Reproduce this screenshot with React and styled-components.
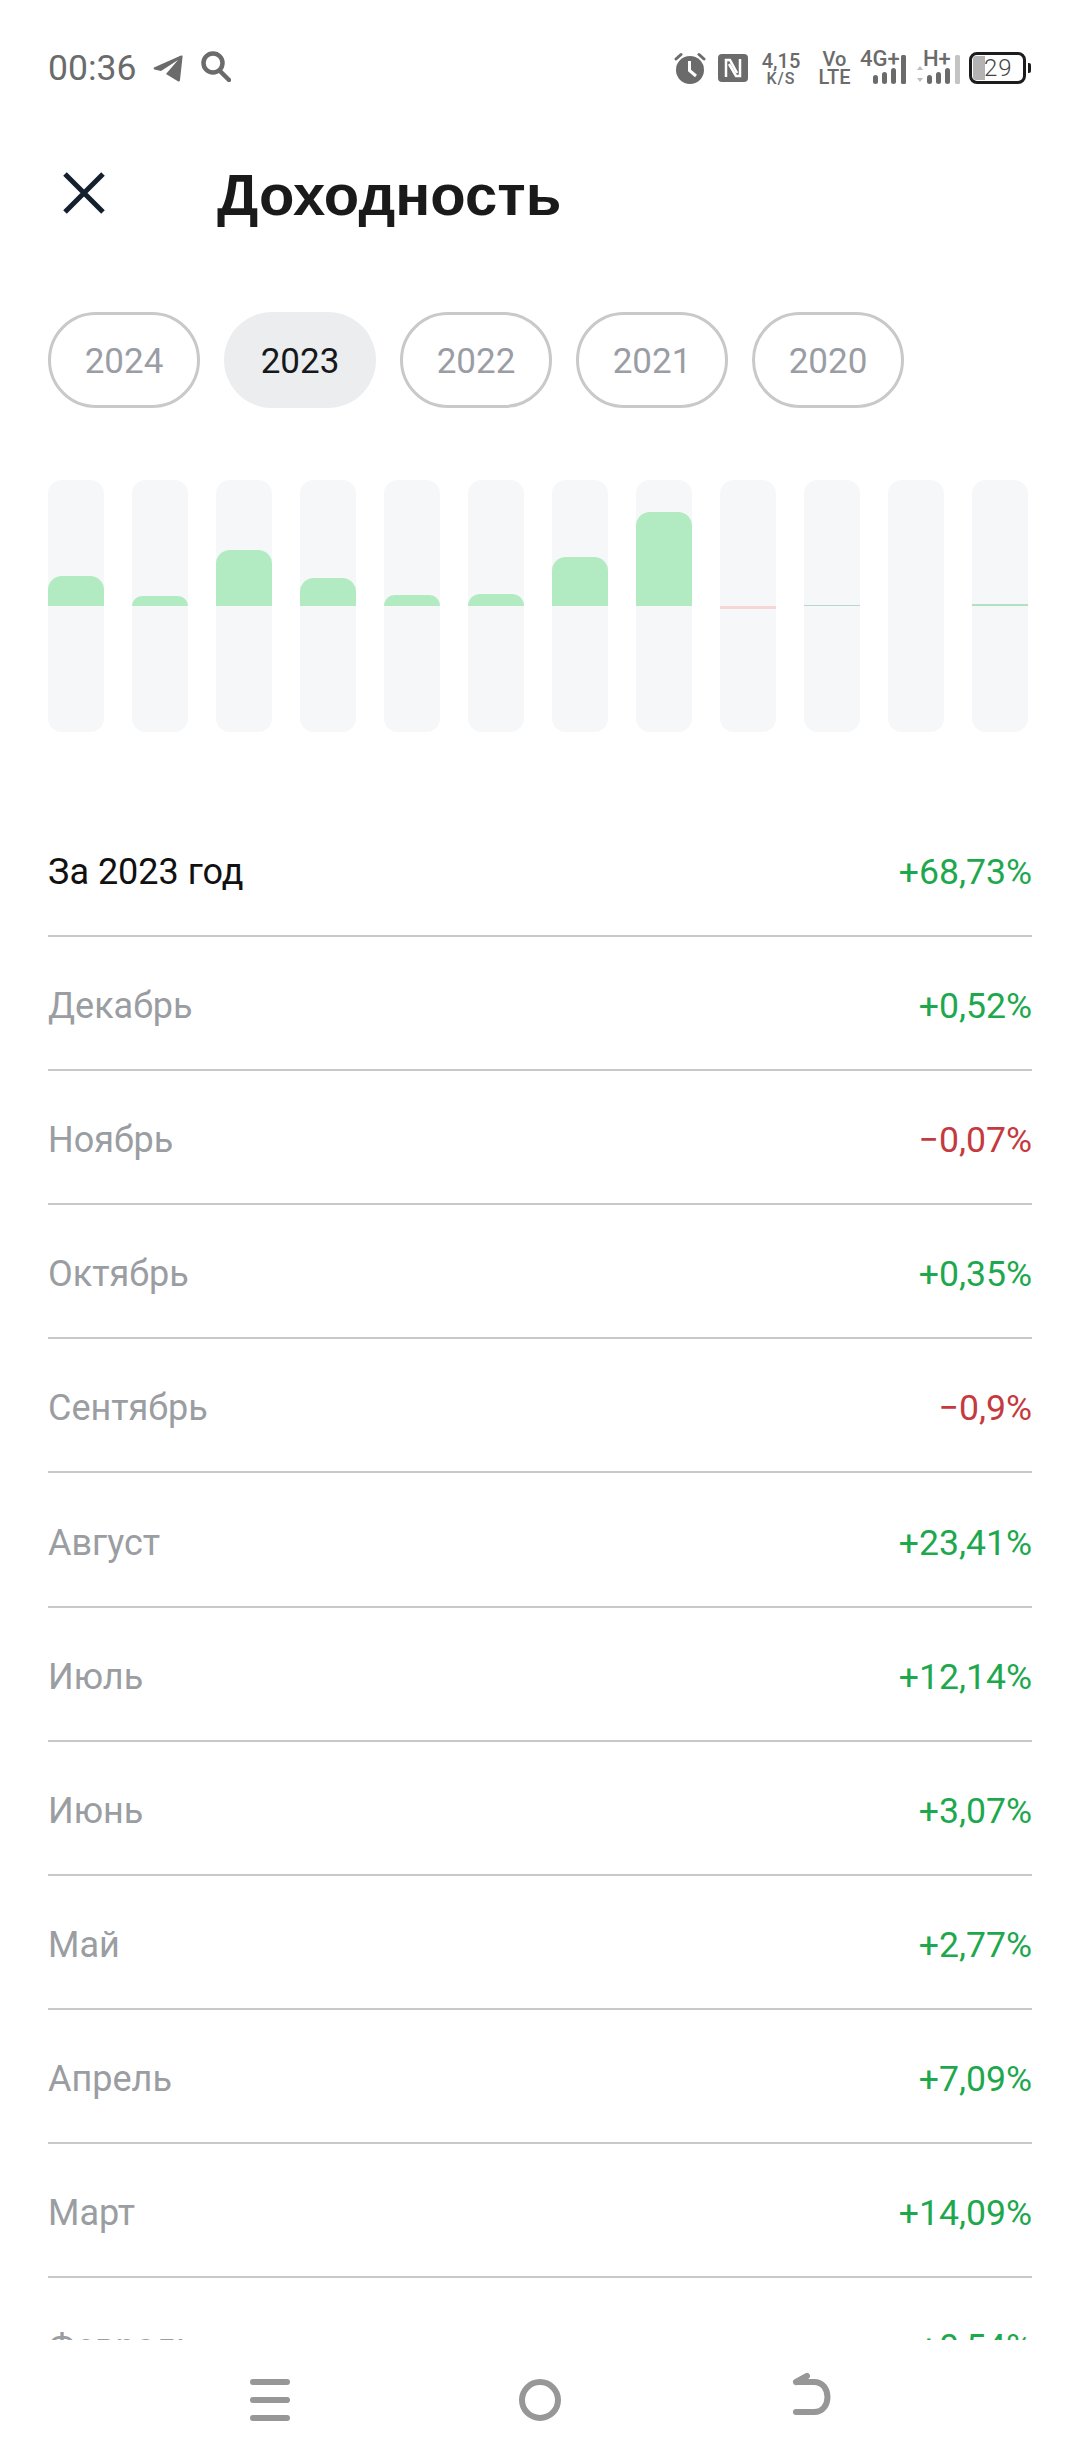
import React from 'react';
import styled, { createGlobalStyle } from 'styled-components';

const GlobalStyle = createGlobalStyle`
  html, body {
    margin: 0;
    padding: 0;
    background: #fff;
    font-family: Roboto, "Liberation Sans", sans-serif;
  }
`;

const Page = styled.div`
  width: 1080px;
  height: 2460px;
  display: flex;
  flex-direction: column;
  overflow: hidden;
  background: #fff;
`;

const StatusBar = styled.div`
  height: 136px;
  flex: none;
  display: flex;
  align-items: center;
  justify-content: space-between;
  padding: 0 48px;
  color: #6b6b6b;
`;

const StatusGroup = styled.div`
  display: flex;
  align-items: center;
`;

const Time = styled.span`
  font-size: 35.5px;
  margin-right: 17px;
`;

const StatusItem = styled.div`
  display: flex;
  margin-left: ${(p) => p.$gap || 0}px;
`;

const MiniStack = styled.div`
  width: ${(p) => p.$width}px;
  margin-left: ${(p) => p.$gap}px;
  display: flex;
  flex-direction: column;
  align-items: center;
  white-space: nowrap;
  font-weight: 500;
  font-size: 20px;
  line-height: ${(p) => p.$line}px;
  color: #6b6b6b;
  small {
    font-size: 16px;
    line-height: 15px;
    letter-spacing: 1px;
  }
`;

const Net = styled.div`
  position: relative;
  width: ${(p) => p.$width}px;
  height: 34px;
  margin-left: ${(p) => p.$gap}px;
`;

const NetLabel = styled.span`
  position: absolute;
  top: -4px;
  left: ${(p) => p.$left || 0}px;
  font-size: 22px;
  line-height: 24px;
  font-weight: 500;
  color: #6b6b6b;
`;

const Battery = styled.div`
  width: 57px;
  height: 32px;
  box-sizing: border-box;
  border: 3px solid #1c1c1c;
  border-radius: 8px;
  display: flex;
  align-items: center;
  padding-left: 1px;
  position: relative;
  margin-left: 9px;
  margin-right: 6px;
  &::after {
    content: '';
    position: absolute;
    right: -8px;
    top: 8px;
    width: 3px;
    height: 10px;
    background: #1c1c1c;
    border-radius: 0 2px 2px 0;
  }
`;

const BatteryFill = styled.div`
  width: 12px;
  height: 24px;
  background: #b3b3b3;
  border-radius: 3px 0 0 3px;
`;

const BatteryText = styled.span`
  font-size: 24px;
  font-weight: 300;
  color: #444;
  margin-left: -1px;
  letter-spacing: 1px;
`;

const Header = styled.header`
  height: 114px;
  flex: none;
  display: flex;
  align-items: center;
  padding-left: 63px;
`;

const CloseIcon = styled.svg`
  width: 42px;
  height: 42px;
  margin-right: 112px;
  flex: none;
`;

const Title = styled.h1`
  margin: 2px 0 0;
  font-size: 58px;
  font-weight: 600;
  color: #1a1a1a;
  font-family: "Liberation Sans", Roboto, sans-serif;
`;

const Chips = styled.div`
  display: flex;
  gap: 24px;
  padding: 62px 48px 0;
`;

const Chip = styled.div`
  width: 152px;
  height: 96px;
  box-sizing: border-box;
  border-radius: 48px;
  display: flex;
  align-items: center;
  justify-content: center;
  padding-top: 2px;
  font-size: 35px;
  color: ${(p) => (p.$active ? '#16181b' : '#9a9da3')};
  background: ${(p) => (p.$active ? '#ebedee' : '#fff')};
  border: ${(p) => (p.$active ? 'none' : '3px solid #c8c9cb')};
`;

const Chart = styled.div`
  display: flex;
  gap: 28px;
  padding: 72px 48px 0;
`;

const Track = styled.div`
  width: 56px;
  height: 252px;
  display: grid;
  grid-template-rows: 126px 126px;
  background: #f5f7f8;
  border-radius: 14px;
  overflow: hidden;
`;

const TrackHalf = styled.div`
  display: flex;
  flex-direction: column;
  justify-content: ${(p) => (p.$top ? 'flex-end' : 'flex-start')};
`;

const Bar = styled.div`
  height: ${(p) => p.$h}px;
  background: ${(p) => p.$color || '#b2ebc1'};
  border-radius: ${(p) => (p.$h > 5 ? '14px 14px 0 0' : '0')};
`;

const List = styled.div`
  flex: 1;
  min-height: 0;
  overflow: hidden;
  margin-top: 71px;
  padding: 0 48px;
`;

const Row = styled.div`
  height: 134.1px;
  box-sizing: border-box;
  display: flex;
  align-items: center;
  justify-content: space-between;
  padding-top: 6px;
  border-bottom: 2px solid #c8c8c8;
  font-size: 36px;
`;

const RowLabel = styled.span`
  color: ${(p) => (p.$strong ? '#111' : '#9a9da1')};
`;

const RowValue = styled.span`
  font-size: 35.6px;
  color: ${(p) => (p.$negative ? '#c53a3f' : '#1ea84e')};
`;

const NavBar = styled.nav`
  height: 120px;
  flex: none;
  display: flex;
  background: #fff;
  align-items: flex-start;
  justify-content: center;
  gap: 226px;
  padding-top: 32px;
  box-sizing: border-box;
`;

const NavIcon = styled.svg`
  width: 44px;
  height: 52px;
  color: #979797;
  fill: none;
  stroke: currentColor;
  stroke-width: 6;
  stroke-linecap: round;
  stroke-linejoin: round;
`;

const TelegramIcon = () => (
  <svg width="30" height="27" viewBox="0 0 30 27" style={{ marginRight: 18 }}>
    <path d="M1 12.500 L28 0.500 Q30 0 29.500 2 L27 25 Q26.500 27.500 24.500 26 L13 19 L25 5 L8 16 L1.500 14.500 Q0 14 1 12.500 Z" fill="#6b6b6b" />
  </svg>
);

const SearchIcon = () => (
  <svg width="30" height="31" viewBox="0 0 30 31" fill="none" stroke="#6b6b6b" strokeWidth="4.500" strokeLinecap="round" style={{ marginTop: -3 }}>
    <circle cx="12" cy="12" r="9.500" />
    <path d="M19 20 L28 29" />
  </svg>
);

const AlarmIcon = () => (
  <svg width="32" height="32" viewBox="0 0 32 32">
    <circle cx="16" cy="18" r="14" fill="#6b6b6b" />
    <path d="M2 7 L7 2.500 M30 7 L25 2.500" stroke="#6b6b6b" strokeWidth="3" strokeLinecap="round" />
    <path d="M15.500 9 V18.500 L22 24" stroke="#fff" strokeWidth="3" fill="none" />
  </svg>
);

const NfcIcon = () => (
  <svg width="30" height="28" viewBox="0 0 30 28">
    <rect width="30" height="28" rx="4" fill="#6b6b6b" />
    <path d="M8 23 V6 H12 L19 19" fill="none" stroke="#fff" strokeWidth="2.500" />
    <path d="M22 5 V22 H18 L11 10" fill="none" stroke="#fff" strokeWidth="2.500" />
  </svg>
);

// signal bars next to the 4G+ / H+ labels
const SignalBars = ({ width, arrows, lastLight }) => (
  <svg width={width} height="34" viewBox={`0 0 ${width} 34`}>
    {arrows && <path d="M0 19 L3 15 L6 19 Z M0 27 L6 27 L3 31 Z" fill="#bdbdbd" />}
    <rect x={width - 33} y="24" width="5" height="9" rx="2.500" fill="#6b6b6b" />
    <rect x={width - 24} y="21" width="5" height="12" rx="2.500" fill="#6b6b6b" />
    <rect x={width - 15} y="17" width="5" height="16" rx="2.500" fill="#6b6b6b" />
    <rect x={width - 5} y="4" width="5" height="29" rx="1.500" fill={lastLight ? '#c4c4c4' : '#6b6b6b'} />
  </svg>
);

const years = ['2024', '2023', '2022', '2021', '2020'];

const bars = [
  { up: 30 },
  { up: 10 },
  { up: 56 },
  { up: 28 },
  { up: 11 },
  { up: 12 },
  { up: 49 },
  { up: 94 },
  { down: 3 },
  { up: 1.5, color: '#b4d8cb' },
  {},
  { up: 2, color: '#b0e2bf' },
];

const rows = [
  { label: 'За 2023 год', value: '+68,73%', strong: true },
  { label: 'Декабрь', value: '+0,52%' },
  { label: 'Ноябрь', value: '−0,07%', negative: true },
  { label: 'Октябрь', value: '+0,35%' },
  { label: 'Сентябрь', value: '−0,9%', negative: true },
  { label: 'Август', value: '+23,41%' },
  { label: 'Июль', value: '+12,14%' },
  { label: 'Июнь', value: '+3,07%' },
  { label: 'Май', value: '+2,77%' },
  { label: 'Апрель', value: '+7,09%' },
  { label: 'Март', value: '+14,09%' },
  { label: 'Февраль', value: '+0,54%' },
];

export default function App() {
  return (
    <Page>
      <GlobalStyle />
      <StatusBar>
        <StatusGroup>
          <Time>00:36</Time>
          <TelegramIcon />
          <SearchIcon />
        </StatusGroup>
        <StatusGroup>
          <StatusItem><AlarmIcon /></StatusItem>
          <StatusItem $gap={12}><NfcIcon /></StatusItem>
          <MiniStack $width={38} $gap={14} $line={20}>
            4,15
            <small>K/S</small>
          </MiniStack>
          <MiniStack $width={29} $gap={20} $line={18}>
            Vo
            <span>LTE</span>
          </MiniStack>
          <Net $width={46} $gap={11}>
            <SignalBars width={46} />
            <NetLabel>4G+</NetLabel>
          </Net>
          <Net $width={43} $gap={11}>
            <SignalBars width={43} arrows lastLight />
            <NetLabel $left={6}>H+</NetLabel>
          </Net>
          <Battery>
            <BatteryFill />
            <BatteryText>29</BatteryText>
          </Battery>
        </StatusGroup>
      </StatusBar>

      <Header>
        <CloseIcon viewBox="0 0 42 42" fill="none" stroke="#14202e" strokeWidth="5">
          <path d="M2 2 L40 40 M40 2 L2 40" />
        </CloseIcon>
        <Title>Доходность</Title>
      </Header>

      <Chips>
        {years.map((y) => (
          <Chip key={y} $active={y === '2023'}>{y}</Chip>
        ))}
      </Chips>

      <Chart>
        {bars.map((b, i) => (
          <Track key={i}>
            <TrackHalf $top>{b.up ? <Bar $h={b.up} $color={b.color} /> : null}</TrackHalf>
            <TrackHalf>{b.down ? <Bar $h={b.down} $color="#f5d5d5" /> : null}</TrackHalf>
          </Track>
        ))}
      </Chart>

      <List>
        {rows.map((r) => (
          <Row key={r.label}>
            <RowLabel $strong={r.strong}>{r.label}</RowLabel>
            <RowValue $negative={r.negative}>{r.value}</RowValue>
          </Row>
        ))}
      </List>

      <NavBar>
        <NavIcon viewBox="0 0 44 52">
          <path d="M5 10 H39 M5 28 H39 M5 46 H39" />
        </NavIcon>
        <NavIcon viewBox="0 0 44 52">
          <circle cx="22" cy="28" r="18" />
        </NavIcon>
        <NavIcon viewBox="0 0 44 52">
          <path d="M8 10 L19 4 M8 10 H26 C44 10 44 40 26 40 H8" />
        </NavIcon>
      </NavBar>
    </Page>
  );
}
